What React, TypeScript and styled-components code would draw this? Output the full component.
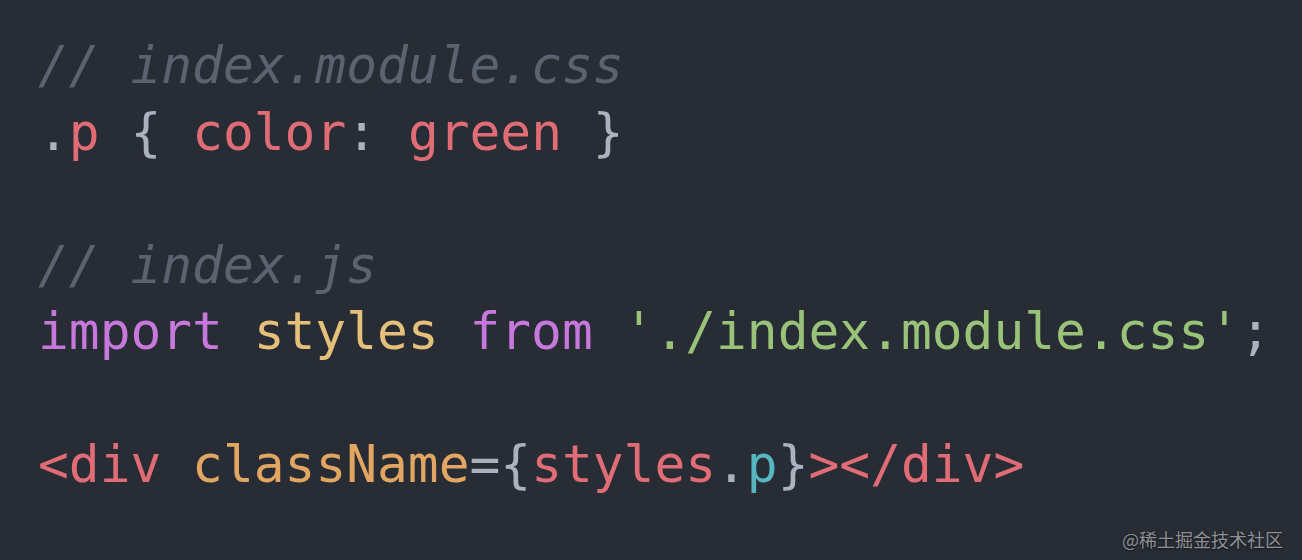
import React from "react";
import styled, { createGlobalStyle } from "styled-components";

const Global = createGlobalStyle`
  html, body { margin: 0; padding: 0; background: #282c34; }
`;

const Frame = styled.div`
  position: relative;
  width: 1302px;
  height: 560px;
  box-sizing: border-box;
  background: #282c34;
  padding: 32px 0 0 38px;
  overflow: hidden;
`;

const Code = styled.pre`
  margin: 0;
  font-family: "DejaVu Sans Mono", "Liberation Mono", monospace;
  font-size: 51.2px;
  line-height: 66.5px;
  color: #abb2bf;
  white-space: pre;
`;

const Line = styled.div`
  height: 66.5px;
`;

type Kind = "comment" | "red" | "purple" | "yellow" | "green" | "cyan" | "orange" | "punct";

const colors: Record<Kind, string> = {
  comment: "#5c6370",
  red: "#e06c75",
  purple: "#c678dd",
  yellow: "#e5c07b",
  green: "#98c379",
  cyan: "#56b6c2",
  orange: "#e2a662",
  punct: "#abb2bf",
};

const Tok = styled.span<{ $k: Kind }>`
  color: ${(p) => colors[p.$k]};
  font-style: ${(p) => (p.$k === "comment" ? "italic" : "normal")};
`;

const Watermark = styled.div`
  position: absolute;
  right: 19px;
  bottom: 11px;
  font-family: "Noto Sans CJK SC", "Noto Sans", sans-serif;
  font-size: 18px;
  line-height: 20px;
  color: #8e9196;
  text-shadow: 0 1px 2px rgba(0, 0, 0, 0.6);
`;

export default function App() {
  return (
    <>
      <Global />
      <Frame>
        <Code>
          <Line>
            <Tok $k="comment">// index.module.css</Tok>
          </Line>
          <Line>
            <Tok $k="punct">.</Tok>
            <Tok $k="red">p</Tok>
            <Tok $k="punct"> {"{"} </Tok>
            <Tok $k="red">color</Tok>
            <Tok $k="punct">: </Tok>
            <Tok $k="red">green</Tok>
            <Tok $k="punct"> {"}"}</Tok>
          </Line>
          <Line />
          <Line>
            <Tok $k="comment">// index.js</Tok>
          </Line>
          <Line>
            <Tok $k="purple">import</Tok>
            <Tok $k="punct"> </Tok>
            <Tok $k="yellow">styles</Tok>
            <Tok $k="punct"> </Tok>
            <Tok $k="purple">from</Tok>
            <Tok $k="punct"> </Tok>
            <Tok $k="green">'./index.module.css'</Tok>
            <Tok $k="punct">;</Tok>
          </Line>
          <Line />
          <Line>
            <Tok $k="red">&lt;div</Tok>
            <Tok $k="punct"> </Tok>
            <Tok $k="orange">className</Tok>
            <Tok $k="punct">={"{"}</Tok>
            <Tok $k="red">styles</Tok>
            <Tok $k="punct">.</Tok>
            <Tok $k="cyan">p</Tok>
            <Tok $k="punct">{"}"}</Tok>
            <Tok $k="red">&gt;&lt;/div&gt;</Tok>
          </Line>
        </Code>
        <Watermark>@稀土掘金技术社区</Watermark>
      </Frame>
    </>
  );
}
